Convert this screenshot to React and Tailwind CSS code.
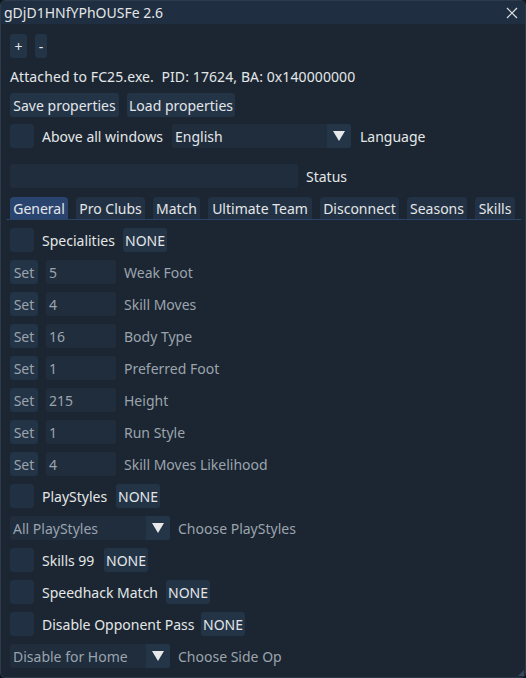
import React from "react";

const Arrow = () => (
  <svg width="14" height="12" viewBox="0 0 14 12">
    <polygon points="1,1 13,1 7,11" fill="#e6e8ea" />
  </svg>
);

const Btn = ({ w, children, dim }) => (
  <div
    className={`h-[24px] rounded-[3px] bg-[#233447] flex items-center justify-center shrink-0 whitespace-nowrap ${dim ? "text-[#9ba4ad]" : "text-[#e4e6e8]"}`}
    style={{ width: w }}
  >
    {children}
  </div>
);

const Check = () => <div className="w-[24px] h-[24px] rounded-[3px] bg-[#213043] shrink-0" />;

const Label = ({ w, children, dim }) => (
  <span
    className={`whitespace-nowrap shrink-0 ${dim ? "text-[#9ba4ad]" : "text-[#e4e6e8]"}`}
    style={w ? { width: w } : undefined}
  >
    {children}
  </span>
);

const CheckRow = ({ label, w }) => (
  <div className="flex items-center h-[24px] gap-[8px]">
    <Check />
    <Label w={w}>{label}</Label>
    <Btn w={44}>NONE</Btn>
  </div>
);

const SetRow = ({ value, label }) => (
  <div className="flex items-center h-[24px] gap-[8px]">
    <Btn w={28} dim>Set</Btn>
    <div className="w-[70px] h-[24px] rounded-[3px] bg-[#1f2d3d] flex items-center pl-[3px] text-[#9ba4ad]">{value}</div>
    <Label dim>{label}</Label>
  </div>
);

const Combo = ({ w, text, dim }) => (
  <div className="h-[24px] rounded-[3px] bg-[#1f2d3d] flex shrink-0" style={{ width: w }}>
    <div className={`flex-1 flex items-center pl-[3px] whitespace-nowrap ${dim ? "text-[#9ba4ad]" : "text-[#e4e6e8]"}`}>{text}</div>
    <div className="w-[24px] h-[24px] rounded-r-[3px] bg-[#243548] flex items-center justify-center">
      <Arrow />
    </div>
  </div>
);

const tabs = [
  ["General", 58, true],
  ["Pro Clubs", 69],
  ["Match", 47],
  ["Ultimate Team", 104],
  ["Disconnect", 79],
  ["Seasons", 60],
  ["Skills", 40],
];

export default function App() {
  return (
    <div
      className="w-[526px] h-[678px] bg-[#0f151c] relative overflow-hidden"
      style={{ fontFamily: '"Noto Sans", "Open Sans", sans-serif', fontSize: 14, lineHeight: "19px" }}
    >
      <div className="w-[526px] h-[678px] rounded-[5px] border border-[#2c3a49] bg-[#1b2632] flex flex-col overflow-hidden">
        <div className="h-[23px] bg-[#1f2e40] flex items-center pl-[3px] pr-[7px] shrink-0">
          <span className="text-[#e4e6e8]">gDjD1HNfYPhOUSFe 2.6</span>
          <div className="flex-1" />
          <svg width="12" height="12" viewBox="0 0 12 12">
            <path d="M1 1 L11 11 M11 1 L1 11" stroke="#dfe2e5" strokeWidth="1.2" />
          </svg>
        </div>

        <div className="flex flex-col pl-[9px] pt-[10px]">
          <div className="flex gap-[8px] h-[24px]">
            <Btn w={17}>+</Btn>
            <Btn w={12}>-</Btn>
          </div>
          <div className="mt-[9px] h-[19px] text-[#e4e6e8] whitespace-pre tracking-[0.1px]">Attached to FC25.exe.  PID: 17624, BA: 0x140000000</div>
          <div className="mt-[7px] flex gap-[8px] h-[24px]">
            <Btn w={109}>Save properties</Btn>
            <Btn w={108}>Load properties</Btn>
          </div>
          <div className="mt-[7px] flex items-center gap-[8px] h-[24px]">
            <Check />
            <Label w={122}>Above all windows</Label>
            <Combo w={179} text="English" />
            <span className="ml-[1px] text-[#e4e6e8]">Language</span>
          </div>
          <div className="mt-[16px] flex items-center gap-[8px] h-[24px]">
            <div className="w-[288px] h-[24px] rounded-[3px] bg-[#1f2d3d]" />
            <span className="text-[#e4e6e8]">Status</span>
          </div>
          <div className="mt-[9px] -ml-[4px] mr-[4px] border-b border-[#2a4468]">
            <div className="flex gap-[8px] h-[22px] pl-[4px]">
              {tabs.map(([t, w, a]) => (
                <div
                  key={t}
                  className={`h-[22px] rounded-t-[4px] flex items-center justify-center whitespace-nowrap text-[#e4e6e8] ${a ? "bg-[#2a4470]" : "bg-[#223244]"}`}
                  style={{ width: w }}
                >
                  {t}
                </div>
              ))}
            </div>
          </div>
          <div className="mt-[8px] flex flex-col gap-[8px]">
            <CheckRow label="Specialities" w={73} />
            <SetRow value="5" label="Weak Foot" />
            <SetRow value="4" label="Skill Moves" />
            <SetRow value="16" label="Body Type" />
            <SetRow value="1" label="Preferred Foot" />
            <SetRow value="215" label="Height" />
            <SetRow value="1" label="Run Style" />
            <SetRow value="4" label="Skill Moves Likelihood" />
            <CheckRow label="PlayStyles" w={66} />
            <div className="flex items-center gap-[8px] h-[24px]">
              <Combo w={160} text="All PlayStyles" dim />
              <Label dim>Choose PlayStyles</Label>
            </div>
            <CheckRow label="Skills 99" w={54} />
            <CheckRow label="Speedhack Match" w={116} />
            <CheckRow label="Disable Opponent Pass" w={151} />
            <div className="flex items-center gap-[8px] h-[24px]">
              <Combo w={160} text="Disable for Home" dim />
              <Label dim>Choose Side Op</Label>
            </div>
          </div>
        </div>
      </div>
      <svg className="absolute right-[2px] bottom-[2px]" width="6" height="6" viewBox="0 0 6 6">
        <polygon points="6,0 6,6 0,6" fill="#3a4a5c" />
      </svg>
    </div>
  );
}
